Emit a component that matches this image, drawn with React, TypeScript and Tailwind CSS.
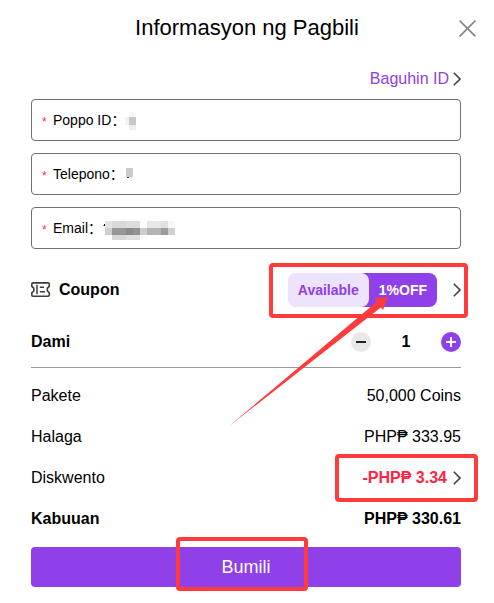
import React, { useState } from 'react';

interface MosaicBlock {
  x: number;
  y: number;
  w: number;
  h: number;
  fill: string;
}

interface Field {
  id: string;
  label: string;
  type: string;
  blocks: MosaicBlock[];
}

// Redacted values, drawn as grey blocks over the input
const fields: Field[] = [
  {
    id: 'poppo-id',
    label: 'Poppo ID',
    type: 'text',
    blocks: [
      { x: 4, y: 0, w: 7, h: 5, fill: '#f7f7f7' },
      { x: 0, y: 5, w: 4, h: 8, fill: '#f3f3f3' },
      { x: 4, y: 5, w: 7, h: 8, fill: '#c8c8c8' },
      { x: 4, y: 13, w: 7, h: 5, fill: '#eeeeee' },
    ],
  },
  {
    id: 'telepono',
    label: 'Telepono',
    type: 'tel',
    blocks: [
      { x: 2, y: 2, w: 7, h: 9, fill: '#cbcbcb' },
      { x: 3, y: 11, w: 2, h: 1, fill: '#333333' },
    ],
  },
  {
    id: 'email',
    label: 'Email',
    type: 'email',
    blocks: [
      { x: 1, y: 5, w: 1, h: 1, fill: '#999999' },
      { x: 2, y: 4, w: 1, h: 2, fill: '#111111' },
      { x: 3, y: 1, w: 7, h: 7, fill: '#e2e2e2' },
      { x: 10, y: 1, w: 14, h: 7, fill: '#d9d9d9' },
      { x: 24, y: 1, w: 14, h: 7, fill: '#dddddd' },
      { x: 38, y: 1, w: 7, h: 7, fill: '#fcfcfc' },
      { x: 45, y: 1, w: 14, h: 7, fill: '#e6e6e6' },
      { x: 59, y: 1, w: 7, h: 7, fill: '#e0e0e0' },
      { x: 66, y: 1, w: 7, h: 7, fill: '#f7f7f7' },
      { x: 3, y: 8, w: 7, h: 7, fill: '#cfcfcf' },
      { x: 10, y: 8, w: 14, h: 7, fill: '#969696' },
      { x: 24, y: 8, w: 7, h: 7, fill: '#8a8a8a' },
      { x: 31, y: 8, w: 7, h: 7, fill: '#939393' },
      { x: 38, y: 8, w: 7, h: 7, fill: '#cdcdcd' },
      { x: 45, y: 8, w: 14, h: 7, fill: '#b3b3b3' },
      { x: 59, y: 8, w: 7, h: 7, fill: '#9c9c9c' },
      { x: 66, y: 8, w: 7, h: 7, fill: '#d0d0d0' },
      { x: 10, y: 15, w: 14, h: 5, fill: '#d8d8d8' },
      { x: 24, y: 15, w: 14, h: 5, fill: '#e0e0e0' },
      { x: 38, y: 15, w: 7, h: 5, fill: '#fbfbfb' },
    ],
  },
];

const Chevron: React.FC<{ className: string }> = ({ className }) => (
  <svg className={className} viewBox="0 0 8 14" fill="none" stroke="#444" strokeWidth="1.6" aria-hidden="true">
    <path d="M0.8 0.8 L7 7 L0.8 13.2" />
  </svg>
);

const CouponIcon: React.FC = () => (
  <svg className="w-5 h-4" viewBox="0 0 20 16" fill="none" stroke="#3c3c3c" strokeWidth="1.6" strokeLinejoin="round" aria-hidden="true">
    <path d="M2 0.9 H17 Q18.3 0.9 18.3 2.2 V4.4 L16.4 6.2 V9 L18.3 10.8 V13 Q18.3 14.2 17 14.2 H2 Q0.8 14.2 0.8 13 V10.8 L2.8 9 V6.2 L0.8 4.4 V2.2 Q0.8 0.9 2 0.9 Z" />
    <path d="M6 2.8 V12.2 M8.8 5.2 H13 M8.8 9.8 H14" strokeWidth="1.5" />
  </svg>
);

const FieldRow: React.FC<{ field: Field }> = ({ field }) => (
  <div className="flex items-center h-[42px] px-[10px] rounded border border-[#707070] text-sm">
    <span className="w-[11px] pt-1 text-xs leading-4 text-[#ff2d4b]">*</span>
    <label htmlFor={field.id}>{field.label}：</label>
    <div className="relative flex-1 h-10">
      <input id={field.id} type={field.type} className="w-full h-full bg-transparent outline-none" />
      <svg className="absolute left-0 top-3 w-[74px] h-5" viewBox="0 0 74 20" shapeRendering="crispEdges" aria-hidden="true">
        {field.blocks.map((b, i) => (
          <rect key={i} x={b.x} y={b.y} width={b.w} height={b.h} fill={b.fill} />
        ))}
      </svg>
    </div>
  </div>
);

export default function App() {
  const [count, setCount] = useState(1);

  return (
    <div className="bg-white pt-3 pb-4 text-base leading-6 text-black font-['Liberation_Sans','Noto_Sans_CJK_SC',sans-serif]">
      <header className="grid grid-cols-[1fr_auto_1fr] items-center px-[18px]">
        <h1 className="col-start-2 text-[22px] leading-8">Informasyon ng Pagbili</h1>
        <button type="button" aria-label="Isara" className="justify-self-end">
          <svg className="w-[17px] h-[17px]" viewBox="0 0 17 17" stroke="#888" strokeWidth="1.7" aria-hidden="true">
            <path d="M0.6 0.6 L16.4 16.4 M16.4 0.6 L0.6 16.4" />
          </svg>
        </button>
      </header>

      <main className="pl-[31px] pr-[33px]">
        <div className="flex justify-end mt-[23px]">
          <a href="#" className="flex items-center gap-1 text-[#8f40e8]">
            Baguhin ID
            <Chevron className="w-2 h-[14px]" />
          </a>
        </div>

        <form className="flex flex-col gap-3 mt-2">
          {fields.map((field) => (
            <FieldRow key={field.id} field={field} />
          ))}
        </form>

        {/* Coupon */}
        <div className="flex items-center justify-between mt-6">
          <div className="flex items-center gap-2 font-bold">
            <CouponIcon />
            Coupon
          </div>
          <button type="button" className="relative flex items-center gap-4 text-sm font-bold">
            <span className="flex rounded-lg bg-linear-to-r from-[#ede3fd] from-50% to-[#8f40e8] to-50% leading-[34px]">
              <span className="px-[10px] rounded-lg bg-[#ede3fd] text-[#8f40e8]">Available</span>
              <span className="px-[10px] text-white">1%OFF</span>
            </span>
            <Chevron className="w-2 h-4" />
            <span className="absolute -left-[19px] -right-[7px] -top-[10px] -bottom-[11px] rounded border-4 border-[#ff3b3b]" />
            <svg className="absolute right-[73px] top-6 w-[160px] h-[130px] z-10" viewBox="0 0 160 130" aria-hidden="true">
              <path d="M0 130 L149 4.6 L146.5 1.2 L160 0 L155 13 L152.8 10.4 Z" fill="#ff3b3b" />
            </svg>
          </button>
        </div>

        {/* Quantity */}
        <div className="flex items-center justify-between mt-[23px] font-bold">
          <span>Dami</span>
          <div className="flex items-center">
            <button
              type="button"
              aria-label="Bawasan"
              onClick={() => setCount(Math.max(1, count - 1))}
              className="flex items-center justify-center w-5 h-5 rounded-full bg-[#e8e8e8]"
            >
              <svg className="w-[10px] h-[10px]" viewBox="0 0 10 10" stroke="#222" strokeWidth="2" aria-hidden="true">
                <path d="M0 5 H10" />
              </svg>
            </button>
            <span className="w-[70px] text-center">{count}</span>
            <button
              type="button"
              aria-label="Dagdagan"
              onClick={() => setCount(count + 1)}
              className="flex items-center justify-center w-5 h-5 rounded-full bg-[#8f40e8]"
            >
              <svg className="w-[10px] h-[10px]" viewBox="0 0 10 10" stroke="#fff" strokeWidth="2" aria-hidden="true">
                <path d="M0 5 H10 M5 0 V10" />
              </svg>
            </button>
          </div>
        </div>

        {/* Order summary */}
        <dl className="flex flex-col gap-[17px] mt-[13px] pt-4 border-t border-[#999]">
          <div className="flex justify-between">
            <dt>Pakete</dt>
            <dd>50,000 Coins</dd>
          </div>
          <div className="flex justify-between">
            <dt>Halaga</dt>
            <dd>PHP₱ 333.95</dd>
          </div>
          <div className="flex justify-between">
            <dt>Diskwento</dt>
            <dd className="relative flex items-center gap-[6px] font-bold text-[#ff2442]">
              -PHP₱ 3.34
              <Chevron className="w-2 h-[14px]" />
              <span className="absolute -left-7 -right-[17px] -top-3 -bottom-3 rounded border-4 border-[#ff3b3b]" />
            </dd>
          </div>
          <div className="flex justify-between font-bold">
            <dt>Kabuuan</dt>
            <dd>PHP₱ 330.61</dd>
          </div>
        </dl>

        <button type="button" className="w-full h-10 mt-4 rounded bg-[#8f40e8] text-lg leading-10 text-white">
          <span className="relative inline-block">
            Bumili
            <span className="absolute -left-[45px] -right-[37px] -top-[10px] -bottom-1 rounded border-4 border-[#ff3b3b]" />
          </span>
        </button>
      </main>
    </div>
  );
}
